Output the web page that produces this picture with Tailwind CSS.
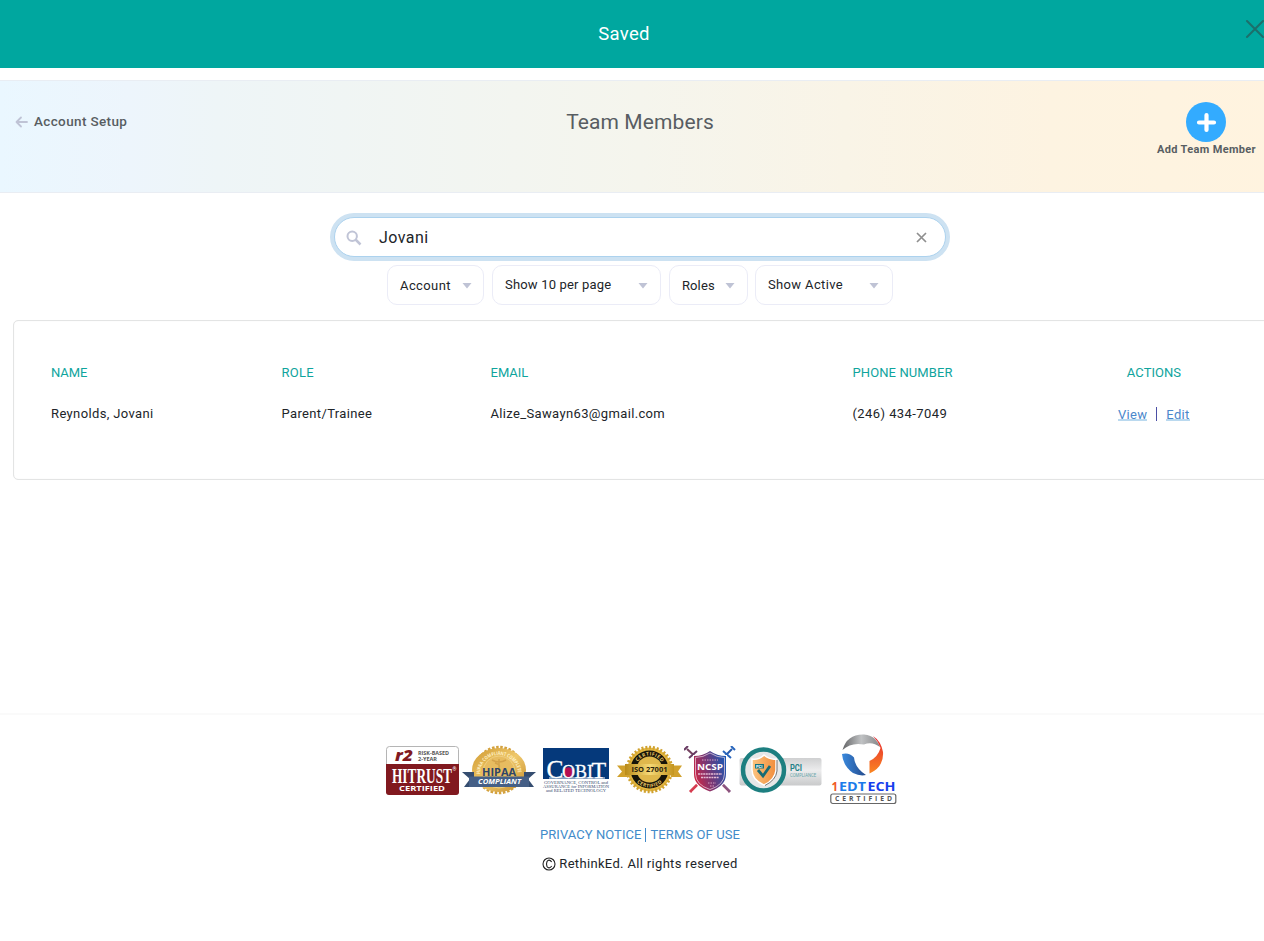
<!DOCTYPE html>
<html lang="en">
<head>
<meta charset="utf-8">
<title>Team Members</title>
<script src="https://cdn.jsdelivr.net/npm/@tailwindcss/browser@4"></script>
</head>
<body class="overflow-hidden bg-white">
<div class="flex h-[941px] w-[1280px] flex-col font-[Roboto,sans-serif] text-[13px] text-[#212529]">
  <div class="flex h-[68px] shrink-0 items-center bg-[#00a79f] text-white">
    <div class="mt-0.5 w-[1248px] text-center text-[18.5px] tracking-[0.3px]">Saved</div>
    <svg class="-ml-[3px] -mt-[10px] shrink-0" width="20" height="20" viewBox="0 0 20 20" fill="none" stroke="#1c6f6b" stroke-width="2" stroke-linecap="round"><path d="M2 2 18 18M18 2 2 18"/></svg>
  </div>

  <header class="mt-3 grid h-[113px] shrink-0 grid-cols-3 border-y border-[#e9edf3] bg-[linear-gradient(90deg,#eaf7ff_0%,#edf5fc_10%,#eef5f7_17%,#f5f5ed_50%,#fdf3e1_82%,#fff3df_100%)] text-[#585d62]">
    <div class="flex h-[81px] items-center pl-[15px] font-medium">
      <svg width="13" height="12" viewBox="0 0 13 12" fill="none" stroke="#bfc3d5" stroke-width="1.800" stroke-linecap="round" stroke-linejoin="round"><path d="M12 6H1.500M6 1.500 1.500 6 6 10.500"/></svg>
      <span class="ml-1.5 text-[13.5px] tracking-[0.36px]">Account Setup</span>
    </div>
    <h1 class="pt-[25px] text-center text-[21px] leading-8 tracking-[0.1px]">Team Members</h1>
    <div class="flex flex-col items-end pt-[21px]">
      <div class="mr-[24px] flex w-[100px] flex-col items-center">
        <svg width="40" height="40" viewBox="0 0 40 40"><circle cx="20" cy="20" r="20" fill="#33abff"/><path d="M20.500 13V28M13 20.500H28" stroke="#fff" stroke-width="4.200" stroke-linecap="round"/></svg>
        <span class="ml-px whitespace-nowrap text-[11px] font-bold leading-[15px] tracking-[0.34px]">Add Team Member</span>
      </div>
    </div>
  </header>

  <div class="ml-[334px] mt-[24px] flex h-10 w-[612px] shrink-0 items-center rounded-full border border-[#acd2ee] bg-white pl-[11px] pr-[18px] ring-4 ring-[#cde2f2]">
    <svg class="mt-px" width="16" height="16" viewBox="0 0 16 16" fill="none" stroke="#c0c4d6" stroke-width="2"><circle cx="6.200" cy="6.200" r="4.700"/><path d="M9.500 9.500 14.500 14.500" stroke-width="2.500"/></svg>
    <span class="ml-[17px] mt-0.5 flex-1 text-[16px] tracking-[0.45px]">Jovani</span>
    <svg width="11" height="11" viewBox="0 0 11 11" stroke="#8f8f8f" stroke-width="1.700"><path d="M1 1 10 10M10 1 1 10"/></svg>
  </div>

  <div class="ml-[387px] mt-[8px] flex h-10 shrink-0 [&>div]:flex [&>div]:items-center [&>div]:justify-between [&>div]:rounded-[10px] [&>div]:border [&>div]:border-[#ebecf7] [&>div]:px-3 [&_svg]:mt-0.5">
    <div class="w-[97px]"><span class="mt-0.5 tracking-[0.4px]">Account</span><svg class="-mr-px" width="10" height="6" fill="#bfc3d5"><path d="M.500 0h9L5 5.500z"/></svg></div>
    <div class="ml-2 w-[169px]"><span class="tracking-[0.18px]">Show 10 per page</span><svg width="10" height="6" fill="#bfc3d5"><path d="M.500 0h9L5 5.500z"/></svg></div>
    <div class="ml-2 w-[79px]"><span class="mt-0.5 tracking-[0.1px]">Roles</span><svg width="10" height="6" fill="#bfc3d5"><path d="M.500 0h9L5 5.500z"/></svg></div>
    <div class="ml-[7px] w-[138px]"><span class="tracking-[0.36px]">Show Active</span><svg class="mr-px" width="10" height="6" fill="#bfc3d5"><path d="M.500 0h9L5 5.500z"/></svg></div>
  </div>

  <section class="ml-[13px] mt-[15px] h-[160px] shrink-0 rounded-[5px] border-[1.500px] border-[#e3e4e4] pl-[37px] pt-[42px] shadow-[inset_0_0_1px_#e6e6e6]">
    <div class="grid grid-cols-[230.5px_209px_362px_240px_100px] text-[13px] leading-5 text-[#0fa49d]">
      <span class="tracking-[-0.1px]">NAME</span><span class="tracking-[0.25px]">ROLE</span><span>EMAIL</span><span class="tracking-[0.1px]">PHONE NUMBER</span><span class="pl-[23px] text-center tracking-[0.05px]">ACTIONS</span>
    </div>
    <div class="mt-[21px] grid grid-cols-[230.5px_209px_362px_265.5px_100px] leading-5">
      <span class="tracking-[0.37px]">Reynolds, Jovani</span><span class="tracking-[0.35px]">Parent/Trainee</span><span class="tracking-[0.35px]">Alize_Sawayn63@gmail.com</span><span class="tracking-[0.42px]">(246) 434-7049</span>
      <span class="flex items-center text-[#4a87cb]"><a class="h-[13px] border-b-2 border-[#bad9ef] leading-[14px] tracking-[0.3px]">View</a><i class="mx-[9px] h-[14px] w-px bg-[#4b4fa5]"></i><a class="h-[13px] border-b-2 border-[#bad9ef] leading-[14px] tracking-[0.3px]">Edit</a></span>
    </div>
  </section>

  <footer class="mt-[233px] flex flex-1 flex-col items-center border-t-2 border-[#fafafa]">
    <div class="ml-px mt-[19px] flex h-[72px] w-[510px] items-start">
      <svg class="mt-[12px] shrink-0" width="73" height="49" viewBox="0 0 73 49">
        <rect x=".5" y=".5" width="72" height="48" rx="3" fill="#fff" stroke="#b5b5b5"/><path d="M0 18H73V46Q73 49 70 49H3Q0 49 0 46Z" fill="#81191f"/>
        <g font-family="Open Sans" font-weight="bold"><text x="9" y="15" font-size="15" font-style="italic" font-weight="800" fill="#81191f" textLength="18" lengthAdjust="spacingAndGlyphs">r2</text>
        <text x="32" y="9" font-size="5.800" fill="#555" textLength="31" lengthAdjust="spacingAndGlyphs">RISK-BASED</text><text x="32" y="15" font-size="5.800" fill="#555" textLength="19" lengthAdjust="spacingAndGlyphs">2-YEAR</text></g>
        <text x="6" y="36.500" font-family="Liberation Serif" font-size="22" font-weight="bold" fill="#fff" textLength="60" lengthAdjust="spacingAndGlyphs">HITRUST</text><text x="66.500" y="25" font-size="5" fill="#fff">®</text>
        <text x="13" y="45" font-family="Open Sans" font-size="7.800" font-weight="bold" fill="#fff" textLength="46" lengthAdjust="spacingAndGlyphs">CERTIFIED</text>
      </svg>
      <svg class="ml-[3px] mt-[11px] shrink-0" width="75" height="50" viewBox="0 0 75 50">
        <defs><linearGradient id="gold" x2="1" y2="1"><stop stop-color="#d09a30"/><stop offset=".5" stop-color="#efc86c"/><stop offset="1" stop-color="#c48a27"/></linearGradient><path id="arc" d="M18 29A19 19 0 0 1 56 29"/></defs>
        <circle cx="37" cy="25" r="22.500" fill="none" stroke="#d3a13d" stroke-width="3.500" stroke-dasharray="2.500 1.600"/>
        <ellipse cx="37" cy="25" rx="27" ry="22" fill="url(#gold)"/><circle cx="37" cy="27" r="16" fill="#e7bc60" stroke="#f0cf80"/>
        <text font-size="5" font-family="Open Sans" font-weight="bold" fill="#fff1c4"><textPath href="#arc" textLength="58" lengthAdjust="spacingAndGlyphs">HIPAA COMPLIANT COMPLETE</textPath></text>
        <path d="M37 14V24M30 15Q37 19 44 15M33 18Q40 20 36 24" stroke="#d3a24a" fill="none" stroke-width="1.500"/>
        <path d="M0 27H12V37H22V42H2L8 34ZM74 27H62V37H52V42H72L66 34Z" fill="#354d70"/><path d="M7 31.500H67V42H7Z" fill="#455f86"/>
        <text x="20" y="30.500" font-family="Open Sans" font-size="10.500" font-weight="bold" fill="#2f4568" textLength="34" lengthAdjust="spacingAndGlyphs">HIPAA</text><text x="16" y="39.300" font-family="Open Sans" font-size="7" font-style="italic" font-weight="bold" fill="#fff" textLength="43" lengthAdjust="spacingAndGlyphs">COMPLIANT</text>
      </svg>
      <svg class="ml-[5px] mt-[14px] shrink-0" width="69" height="45" viewBox="0 0 69 45" font-family="Liberation Serif">
        <path d="M1 0H67V31H1Z" fill="#05397b"/><ellipse cx="26.500" cy="24.700" rx="5" ry="5.500" fill="#b30e52"/>
        <g fill="#fff" stroke="#fff" stroke-width=".3"><text x="4.500" y="30" font-size="25" textLength="17" lengthAdjust="spacingAndGlyphs">C</text><text x="20" y="30" font-size="18">O</text><text x="33" y="30" font-size="18">B</text><text x="45" y="30" font-size="18">I</text><text x="49.500" y="30" font-size="24">T</text></g><path d="M7 30H63" stroke="#fff"/>
        <g font-size="4.800" fill="#34486c"><text x="2" y="35.500" textLength="64" lengthAdjust="spacingAndGlyphs">GOVERNANCE, CONTROL and</text><text x="1" y="39.700" textLength="66" lengthAdjust="spacingAndGlyphs">ASSURANCE for INFORMATION</text><text x="4" y="43.800" textLength="60" lengthAdjust="spacingAndGlyphs">and RELATED TECHNOLOGY</text></g>
      </svg>
      <svg class="ml-[6px] mt-[11px] shrink-0" width="66" height="49" viewBox="0 0 66 49">
        <defs><linearGradient id="rib"><stop stop-color="#b98b18"/><stop offset=".5" stop-color="#f6d977"/><stop offset="1" stop-color="#c4951f"/></linearGradient><path id="t1" d="M18.500 24.500A14 14 0 0 1 46.500 24.500"/><path id="t2" d="M14.500 24.500A18 18 0 0 0 50.500 24.500"/></defs>
        <circle cx="32.500" cy="24.500" r="22" fill="#e4b740" stroke="#d0a22f" stroke-width="3.500" stroke-dasharray="2 1.800"/><circle cx="32.500" cy="24.500" r="19" fill="#171509"/><circle cx="32.500" cy="24.500" r="13" fill="#e0b84c"/>
        <g font-family="Open Sans" font-size="5" font-weight="bold" fill="#e4c263"><text><textPath href="#t1" startOffset="8" textLength="28">CERTIFIED</textPath></text><text><textPath href="#t2" startOffset="14" textLength="28">CERTIFIED</textPath></text></g>
        <path d="M0 20.500H12V32H0L5 26.500ZM65 20.500H54V32H65L61 26.500Z" fill="#d1a12c"/><path d="M8 19H57V30H8Z" fill="url(#rib)"/><text x="14.500" y="27" font-size="7.300" font-family="Open Sans" font-weight="bold" fill="#2b240d" textLength="36" lengthAdjust="spacingAndGlyphs">ISO 27001</text>
      </svg>
      <svg class="ml-[1px] mt-[12px] shrink-0" width="52" height="48" viewBox="0 0 52 48">
        <defs><linearGradient id="nc" x1="0" y1=".7" x2="1" y2=".3"><stop stop-color="#d12643"/><stop offset=".5" stop-color="#713878"/><stop offset="1" stop-color="#1d57b2"/></linearGradient></defs>
        <path d="M3 3 15 14" stroke="#744260" stroke-width="2"/><path d="M48 3 37 14" stroke="#265aac" stroke-width="2"/><path d="M6 46 18 34" stroke="#d63d50" stroke-width="3"/><path d="M46 46 34 34" stroke="#8b5580" stroke-width="3"/><path d="M8 46 18 36M44 46 34 36" stroke="#fbd7dd" stroke-width=".7"/>
        <path d="M0 4 4 0M5 12 13 5" stroke="#683b63" stroke-width="2"/><path d="M47 0 51 4M39 5 47 12" stroke="#2866bd" stroke-width="2"/>
        <path d="M26 4Q33 9 43 9V28Q43 41 26 46.500Q9 41 9 28V9Q19 9 26 4Z" fill="#fff"/><path d="M26 5Q33 10 42 10V28Q42 40 26 45.500Q10 40 10 28V10Q19 10 26 5Z" fill="url(#nc)"/><path d="M26 7Q33 11.500 40.500 11.500V28Q40 39 26 43.500Q12 39 11.500 28V11.500Q19 11.500 26 7Z" fill="none" stroke="#efd9e5" stroke-width=".7"/>
        <text x="13" y="23.500" font-family="Open Sans" font-weight="bold" font-size="8" fill="#fff" textLength="26" lengthAdjust="spacingAndGlyphs">NCSP</text><path d="M14 28H38M17 31.500H35" stroke="#e5bbd3" stroke-width="1.500" stroke-dasharray="2 .6"/><path d="M24 37H32M26 40H30M18 14H34" stroke="#d5a1c3" stroke-dasharray="1.500 1"/>
      </svg>
      <svg class="ml-[3px] mt-[12px] shrink-0" width="84" height="48" viewBox="0 0 84 48">
        <defs><linearGradient id="silver" x2="0" y2="1"><stop stop-color="#cfd0d1"/><stop offset=".45" stop-color="#ececed"/><stop offset="1" stop-color="#c9cacb"/></linearGradient><linearGradient id="or" x2="1"><stop stop-color="#fbc581"/><stop offset="1" stop-color="#f18d3c"/></linearGradient></defs>
        <rect x=".5" y="12" width="82" height="27.500" rx="2" fill="url(#silver)"/><circle cx="24.500" cy="24" r="20.500" fill="#e6e7e7" stroke="#1d7f80" stroke-width="4.500"/><path d="M25 9Q31 14 37 13V24Q36 34 25 39Q13 34 13 24V13Q20 14 25 9Z" fill="url(#or)" stroke="#fff" stroke-width="1.500"/><path d="M38 14V25Q37 34 26 39.500" fill="none" stroke="#777" stroke-width="1"/>
        <path d="m19 24 5 6 7-10" stroke="#176b75" stroke-width="2.800" fill="none"/><path d="M16 18H25V22.500H16Z" fill="#147480"/><text x="17" y="22" font-size="4" font-weight="bold" fill="#fff">PCI</text>
        <text x="51" y="24.500" font-size="8.500" font-weight="bold" fill="#238087" textLength="12" lengthAdjust="spacingAndGlyphs">PCI</text><text x="51" y="30.500" font-size="5.500" fill="#65a4a8" textLength="26" lengthAdjust="spacingAndGlyphs">COMPLIANCE</text>
      </svg>
      <svg class="ml-[7px] shrink-0" width="68" height="71" viewBox="0 0 68 71">
        <defs><linearGradient id="gr"><stop stop-color="#646567"/><stop offset=".5" stop-color="#c0c2c4"/><stop offset="1" stop-color="#858688"/></linearGradient><linearGradient id="bl"><stop stop-color="#3a8ade"/><stop offset="1" stop-color="#244a8c"/></linearGradient><linearGradient id="red" x2="0" y2="1"><stop stop-color="#e62632"/><stop offset="1" stop-color="#fa8721"/></linearGradient></defs>
        <path d="M12.500 16Q17 0 34 .5Q41 1 45 5Q48 8 50 13Q42 7 34 10.500Q21 8 12.500 16Z" fill="url(#gr)"/><path d="M12 20Q19 18 24 23.500Q25 34 36 41Q30 42.500 23 39Q13 32 12 20Z" fill="url(#bl)"/><path d="M43 2Q51 7 53 18Q54 33 39.500 39.500V27Q48 23 50.500 14Q48 7 43 2Z" fill="url(#red)"/>
        <g font-family="Open Sans" font-size="11.500" font-weight="bold"><text x="1.500" y="56.500" fill="#f05a28">1</text><text x="9" y="56.500" fill="#1c7bea" textLength="27" lengthAdjust="spacingAndGlyphs">EDT</text><text x="37.500" y="56.500" fill="#1640ed" textLength="28" lengthAdjust="spacingAndGlyphs">ECH</text></g>
        <rect x=".8" y="60" width="65" height="9.500" rx="2" fill="#fff" stroke="#666" stroke-width="1.200"/><text x="5" y="67.300" font-family="Open Sans" font-size="6.800" font-weight="bold" fill="#555" textLength="57" lengthAdjust="spacing">CERTIFIED</text>
      </svg>
    </div>
    <div class="mt-[19px] flex items-center leading-5 text-[#428bca]"><a class="tracking-[0.06px]">PRIVACY NOTICE</a><span class="mx-1 h-[14px] w-px bg-[#428bca]"></span><a class="tracking-[0.1px]">TERMS OF USE</a></div>
    <div class="mt-[9px] flex items-center leading-5"><svg class="mr-[3px]" width="14" height="14" viewBox="0 0 14 14" fill="none" stroke="#222" stroke-width="1.100"><circle cx="7" cy="7" r="6"/><path d="M9.700 5Q7 1.500 5 4.500Q4 7 5 9.500Q7 12.500 9.700 9"/></svg><span class="tracking-[0.33px]">RethinkEd. All rights reserved</span></div>
  </footer>
</div>
</body>
</html>
